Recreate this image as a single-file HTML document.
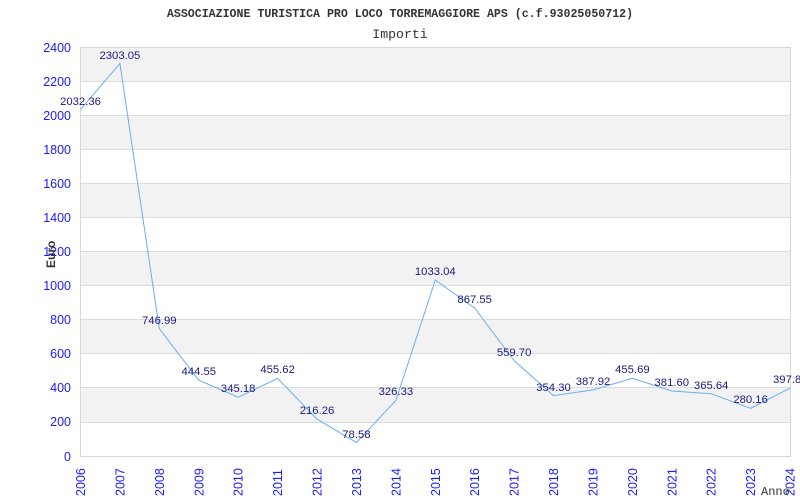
<!DOCTYPE html>
<html><head><meta charset="utf-8"><style>
html,body{margin:0;padding:0;background:#fff;width:800px;height:500px;overflow:hidden}
</style></head><body>
<svg width="800" height="500" xmlns="http://www.w3.org/2000/svg" font-family="Liberation Sans, sans-serif">
<rect width="800" height="500" fill="#fff"/>
<text x="400" y="17" text-anchor="middle" font-family="Liberation Mono, monospace" font-weight="bold" font-size="11.6" fill="#333">ASSOCIAZIONE TURISTICA PRO LOCO TORREMAGGIORE APS (c.f.93025050712)</text>
<text x="400" y="38" text-anchor="middle" font-family="Liberation Mono, monospace" font-size="13.2" fill="#333">Importi</text>
<g fill="#f2f2f2">
<rect x="80.5" y="47.3" width="710" height="34.1"/>
<rect x="80.5" y="115.4" width="710" height="34.1"/>
<rect x="80.5" y="183.6" width="710" height="34.1"/>
<rect x="80.5" y="251.7" width="710" height="34.1"/>
<rect x="80.5" y="319.8" width="710" height="34.1"/>
<rect x="80.5" y="388" width="710" height="34.1"/>
</g>
<g stroke="#ddd" stroke-width="1">
<line x1="80.5" x2="790.5" y1="81.5" y2="81.5"/><line x1="80.5" x2="790.5" y1="115.5" y2="115.5"/>
<line x1="80.5" x2="790.5" y1="149.5" y2="149.5"/><line x1="80.5" x2="790.5" y1="183.5" y2="183.5"/>
<line x1="80.5" x2="790.5" y1="217.5" y2="217.5"/><line x1="80.5" x2="790.5" y1="251.5" y2="251.5"/>
<line x1="80.5" x2="790.5" y1="285.5" y2="285.5"/><line x1="80.5" x2="790.5" y1="319.5" y2="319.5"/>
<line x1="80.5" x2="790.5" y1="353.5" y2="353.5"/><line x1="80.5" x2="790.5" y1="387.5" y2="387.5"/>
<line x1="80.5" x2="790.5" y1="422.5" y2="422.5"/>
</g>
<rect x="80.5" y="47.5" width="710" height="409" fill="none" stroke="#d8d8d8"/>
<g fill="#1a1aff" font-size="12.5" text-anchor="end">
<text x="71" y="52">2400</text><text x="71" y="86">2200</text><text x="71" y="120">2000</text>
<text x="71" y="154">1800</text><text x="71" y="188">1600</text><text x="71" y="222">1400</text>
<text x="71" y="256">1200</text><text x="71" y="290">1000</text><text x="71" y="324">800</text>
<text x="71" y="358">600</text><text x="71" y="392">400</text><text x="71" y="426">200</text>
<text x="71" y="461">0</text>
</g>
<g fill="#1a1aff" font-size="12.5">
<text transform="translate(85,496) rotate(-90)">2006</text>
<text transform="translate(124.4,496) rotate(-90)">2007</text>
<text transform="translate(163.8,496) rotate(-90)">2008</text>
<text transform="translate(203.3,496) rotate(-90)">2009</text>
<text transform="translate(242.7,496) rotate(-90)">2010</text>
<text transform="translate(282.1,496) rotate(-90)">2011</text>
<text transform="translate(321.5,496) rotate(-90)">2012</text>
<text transform="translate(360.9,496) rotate(-90)">2013</text>
<text transform="translate(400.4,496) rotate(-90)">2014</text>
<text transform="translate(439.8,496) rotate(-90)">2015</text>
<text transform="translate(479.2,496) rotate(-90)">2016</text>
<text transform="translate(518.6,496) rotate(-90)">2017</text>
<text transform="translate(558,496) rotate(-90)">2018</text>
<text transform="translate(597.5,496) rotate(-90)">2019</text>
<text transform="translate(636.9,496) rotate(-90)">2020</text>
<text transform="translate(676.3,496) rotate(-90)">2021</text>
<text transform="translate(715.7,496) rotate(-90)">2022</text>
<text transform="translate(755.1,496) rotate(-90)">2023</text>
<text transform="translate(794.5,496) rotate(-90)">2024</text>
</g>
<text transform="translate(55,268) rotate(-90)" font-size="12" font-weight="bold" fill="#333">Euro</text>
<text x="761" y="495" font-family="Liberation Mono, monospace" font-size="12" fill="#333">Anno</text>
<polyline fill="none" stroke="#6aaef0" stroke-width="1" points="80.5,109.6 119.9,63.5 159.3,328.7 198.8,380.2 238.2,397.2 277.6,378.4 317,419.1 356.4,442.6 395.9,400.4 435.3,280 474.7,308.1 514.1,360.6 553.5,395.6 593,389.9 632.4,378.3 671.8,391 711.2,393.7 750.6,408.3 790,388.2"/>
<g fill="#1a1a80" font-size="11.3" text-anchor="middle">
<text x="80.5" y="105">2032.36</text><text x="119.9" y="59">2303.05</text>
<text x="159.3" y="324">746.99</text><text x="198.8" y="375">444.55</text>
<text x="238.2" y="392">345.18</text><text x="277.6" y="373">455.62</text>
<text x="317" y="414">216.26</text><text x="356.4" y="438">78.58</text>
<text x="395.9" y="395">326.33</text><text x="435.3" y="275">1033.04</text>
<text x="474.7" y="303">867.55</text><text x="514.1" y="356">559.70</text>
<text x="553.5" y="391">354.30</text><text x="593" y="385">387.92</text>
<text x="632.4" y="373">455.69</text><text x="671.8" y="386">381.60</text>
<text x="711.2" y="389">365.64</text><text x="750.6" y="403">280.16</text>
<text x="773" y="383" text-anchor="start">397.8</text>
</g>
</svg>
</body></html>
